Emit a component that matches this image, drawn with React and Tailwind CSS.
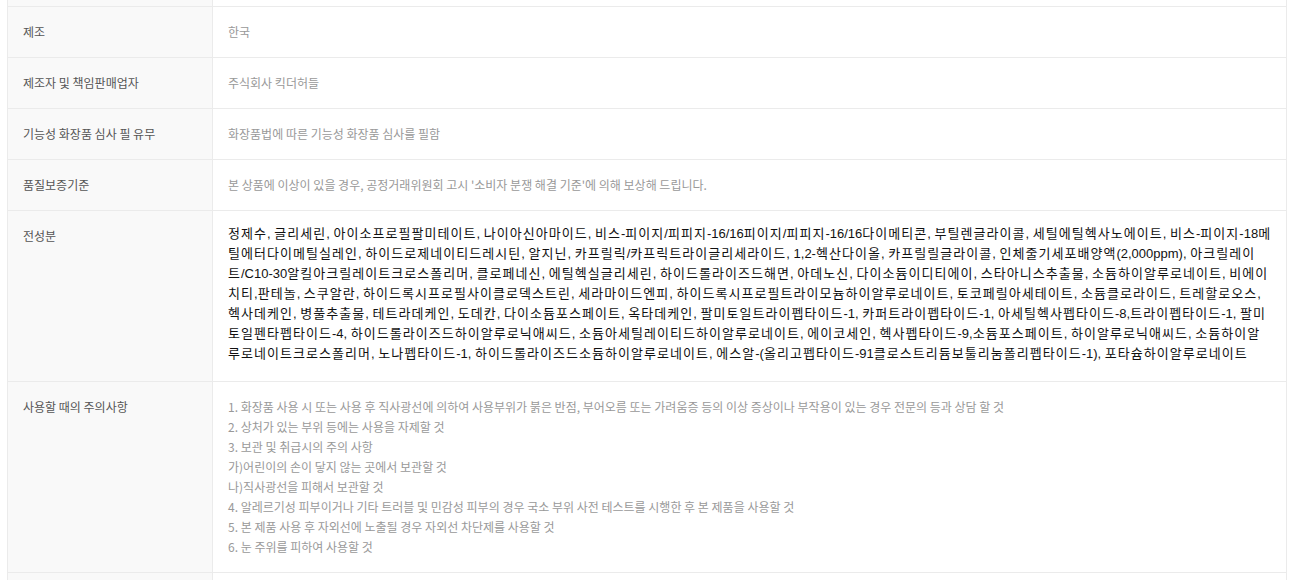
import React from 'react';

const INGREDIENTS =
  "정제수, 글리세린, 아이소프로필팔미테이트, 나이아신아마이드, 비스-피이지/피피지-16/16피이지/피피지-16/16다이메티콘, 부틸렌글라이콜, 세틸에틸헥사노에이트, 비스-피이지-18메틸에터다이메틸실레인, 하이드로제네이티드레시틴, 알지닌, 카프릴릭/카프릭트라이글리세라이드, 1,2-헥산다이올, 카프릴릴글라이콜, 인체줄기세포배양액(2,000ppm), 아크릴레이트/C10-30알킬아크릴레이트크로스폴리머, 클로페네신, 에틸헥실글리세린, 하이드롤라이즈드해면, 아데노신, 다이소듐이디티에이, 스타아니스추출물, 소듐하이알루로네이트, 비에이치티,판테놀, 스쿠알란, 하이드록시프로필사이클로덱스트린, 세라마이드엔피, 하이드록시프로필트라이모늄하이알루로네이트, 토코페릴아세테이트, 소듐클로라이드, 트레할로오스, 헥사데케인, 병풀추출물, 테트라데케인, 도데칸, 다이소듐포스페이트, 옥타데케인, 팔미토일트라이펩타이드-1, 카퍼트라이펩타이드-1, 아세틸헥사펩타이드-8,트라이펩타이드-1, 팔미토일펜타펩타이드-4, 하이드롤라이즈드하이알루로닉애씨드, 소듐아세틸레이티드하이알루로네이트, 에이코세인, 헥사펩타이드-9,소듐포스페이트, 하이알루로닉애씨드, 소듐하이알루로네이트크로스폴리머, 노나펩타이드-1, 하이드롤라이즈드소듐하이알루로네이트, 에스알-(올리고펩타이드-91클로스트리듐보툴리눔폴리펩타이드-1), 포타슘하이알루로네이트";

const CAUTIONS = [
  '1. 화장품 사용 시 또는 사용 후 직사광선에 의하여 사용부위가 붉은 반점, 부어오름 또는 가려움증 등의 이상 증상이나 부작용이 있는 경우 전문의 등과 상담 할 것',
  '2. 상처가 있는 부위 등에는 사용을 자제할 것',
  '3. 보관 및 취급시의 주의 사항',
  '가)어린이의 손이 닿지 않는 곳에서 보관할 것',
  '나)직사광선을 피해서 보관할 것',
  '4. 알레르기성 피부이거나 기타 트러블 및 민감성 피부의 경우 국소 부위 사전 테스트를 시행한 후 본 제품을 사용할 것',
  '5. 본 제품 사용 후 자외선에 노출될 경우 자외선 차단제를 사용할 것',
  '6. 눈 주위를 피하여 사용할 것',
];

const ROWS = [
  { label: '제조', value: '한국' },
  { label: '제조자 및 책임판매업자', value: '주식회사 킥더허들' },
  { label: '기능성 화장품 심사 필 유무', value: '화장품법에 따른 기능성 화장품 심사를 필함' },
  {
    label: '품질보증기준',
    value: "본 상품에 이상이 있을 경우, 공정거래위원회 고시 '소비자 분쟁 해결 기준'에 의해 보상해 드립니다.",
  },
];

const labelCls =
  "bg-[#f9f9f9] border-r border-[#ebebeb] px-[15px] py-[15px] text-[12px] leading-5 text-[#555] font-['Noto_Sans_CJK_KR',sans-serif]";
const grayCls =
  "px-[15px] py-[15px] text-[12px] leading-5 text-[#999] font-['Noto_Sans_CJK_KR',sans-serif]";

const Row = ({ children }) => (
  <div className="grid grid-cols-[205px_1fr] border-t border-[#ebebeb]">{children}</div>
);

// hangul runs get a little tracking so each syllable takes a full 13px
const Ingredients = ({ text }) =>
  text.split(/([\uAC00-\uD7A3]+)/).map((part, i) =>
    i % 2 === 1 ? (
      <span key={i} className="tracking-[1.04px]">{part}</span>
    ) : (
      <span key={i}>{part}</span>
    )
  );

export default function App() {
  return (
    <div className="bg-white w-[1293px] h-[580px] overflow-hidden pl-[7px] pr-[6px]">
      <div className="border-x border-[#ebebeb]">
        <div className="grid grid-cols-[205px_1fr] h-[6px]">
          <div className="bg-[#f9f9f9] border-r border-[#ebebeb]" />
          <div />
        </div>

        {ROWS.map((row) => (
          <Row key={row.label}>
            <div className={labelCls}>{row.label}</div>
            <div className={grayCls}>{row.value}</div>
          </Row>
        ))}

        <Row>
          <div className={labelCls}>전성분</div>
          <div className="pl-[15px] pr-[14px] pt-[13px] pb-[17px] text-[13px] leading-5 text-[#111] font-['Liberation_Sans','Noto_Sans_CJK_KR',sans-serif]">
            <Ingredients text={INGREDIENTS} />
          </div>
        </Row>

        <Row>
          <div className={labelCls}>사용할 때의 주의사항</div>
          <div className={grayCls}>
            {CAUTIONS.map((line) => (
              <p key={line}>{line}</p>
            ))}
          </div>
        </Row>

        <Row>
          <div className={`${labelCls} h-[60px]`} />
          <div />
        </Row>
      </div>
    </div>
  );
}
